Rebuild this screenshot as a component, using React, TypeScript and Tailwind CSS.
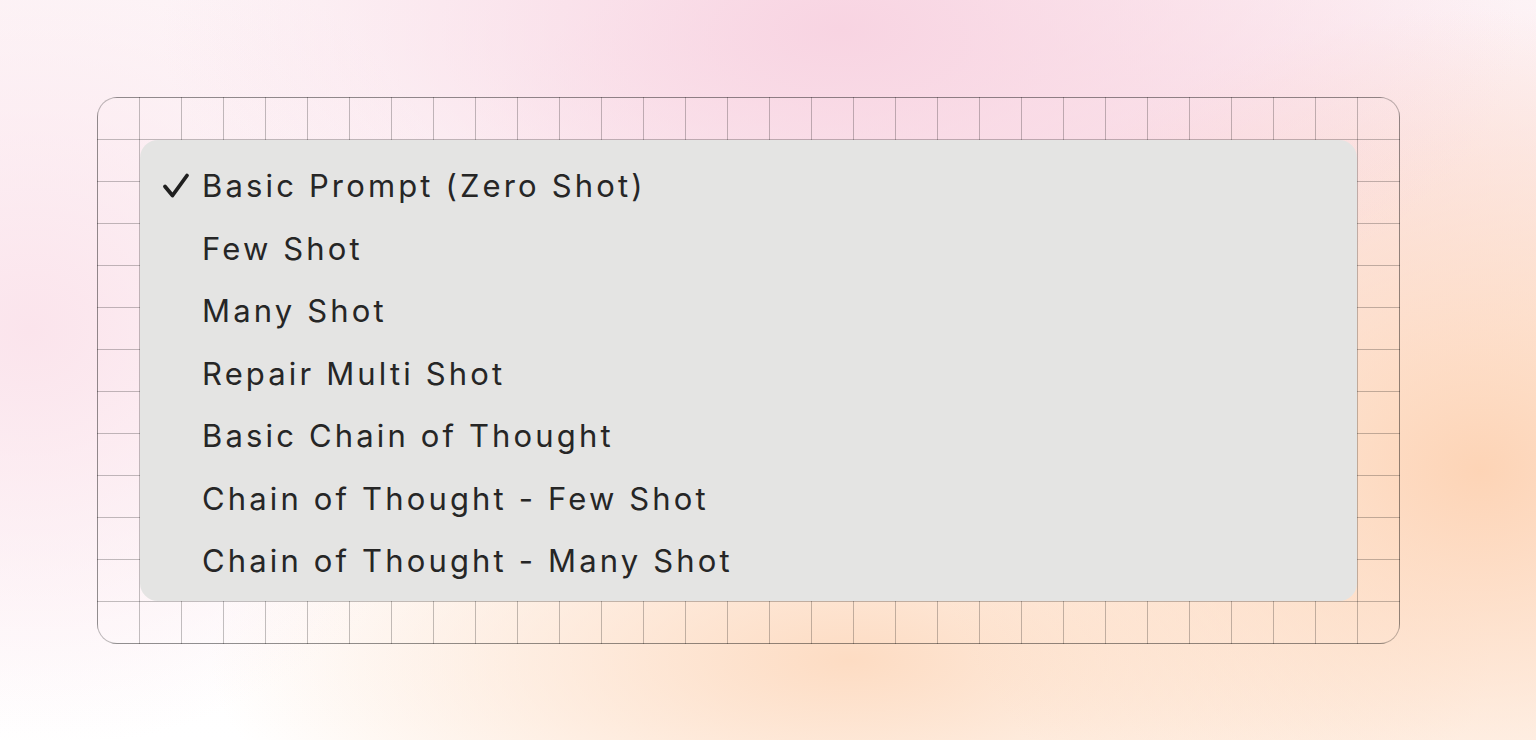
import React from 'react';

const options = [
  'Basic Prompt (Zero Shot)',
  'Few Shot',
  'Many Shot',
  'Repair Multi Shot',
  'Basic Chain of Thought',
  'Chain of Thought - Few Shot',
  'Chain of Thought - Many Shot',
];

const Check = () => (
  <svg className="w-[28px] h-[28px]" viewBox="0 0 28 28" fill="none" stroke="#1f1f1f" strokeWidth="3.8" strokeLinecap="round" strokeLinejoin="round">
    <path d="M3 14.5l7.5 9L25 3.5" />
  </svg>
);

const App: React.FC = () => {
  return (
    <div className="w-full h-[740px] overflow-hidden pl-[97px] pt-[97px] font-['Inter','Noto_Sans',sans-serif] bg-[radial-gradient(680px_340px_at_840px_30px,#f8d4e2,transparent),radial-gradient(460px_420px_at_30px_330px,#fbe4ec,transparent),radial-gradient(560px_460px_at_1480px_470px,#fdd4b6,transparent),radial-gradient(640px_260px_at_850px_660px,#fddcc3,transparent),radial-gradient(700px_260px_at_1150px_170px,#fbe2e9,transparent),linear-gradient(180deg,#fdf6f8,#ffffff)]">
      <div className="w-[1303px] h-[547px] rounded-[20px] border border-black/25 bg-origin-border bg-[linear-gradient(to_right,rgba(0,0,0,0.24)_1px,transparent_1px),linear-gradient(to_bottom,rgba(0,0,0,0.24)_1px,transparent_1px)] bg-[size:42px_42px] p-[42px]">
        <div className="w-[1217px] h-[461px] rounded-[18px] bg-[#e4e4e3] pt-[15px] pb-[8px] pl-[22px]">
          {options.map((o, i) => (
            <div key={o} className="flex items-center h-[62.5px]">
              <div className="w-[40px] flex items-center">{i === 0 && <Check />}</div>
              <span className="text-[31px] text-[#262626] tracking-[3.15px]">{o}</span>
            </div>
          ))}
        </div>
      </div>
    </div>
  );
};

export default App;
